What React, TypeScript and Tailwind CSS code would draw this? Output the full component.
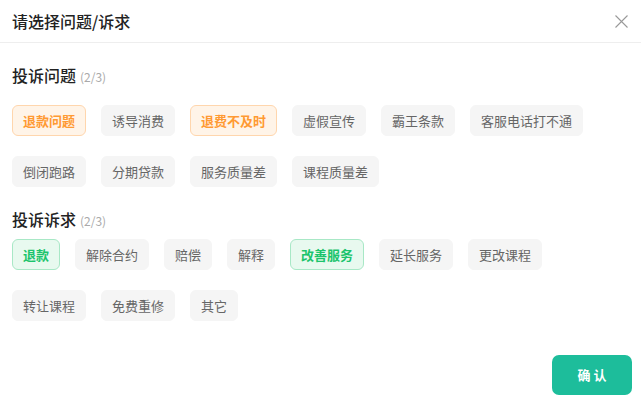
import { useState } from "react";

type Tag = { label: string; selected?: boolean };

const issues: Tag[] = [
  { label: "退款问题", selected: true },
  { label: "诱导消费" },
  { label: "退费不及时", selected: true },
  { label: "虚假宣传" },
  { label: "霸王条款" },
  { label: "客服电话打不通" },
  { label: "倒闭跑路" },
  { label: "分期贷款" },
  { label: "服务质量差" },
  { label: "课程质量差" },
];

const demands: Tag[] = [
  { label: "退款", selected: true },
  { label: "解除合约" },
  { label: "赔偿" },
  { label: "解释" },
  { label: "改善服务", selected: true },
  { label: "延长服务" },
  { label: "更改课程" },
  { label: "转让课程" },
  { label: "免费重修" },
  { label: "其它" },
];

const TagList = ({
  tags,
  tone,
  onToggle,
}: {
  tags: Tag[];
  tone: "orange" | "green";
  onToggle: (i: number) => void;
}) => (
  <div className="flex flex-wrap w-[600px] gap-x-[15px] gap-y-[20px]">
    {tags.map((tag, i) => {
      const active =
        tone === "orange"
          ? "bg-[#fff4e8] border-[#ffd6ad] text-[#ff9a33] font-bold"
          : "bg-[#e8f9ef] border-[#a8e8c6] text-[#1cc46c] font-bold";
      return (
        <button
          key={tag.label}
          onClick={() => onToggle(i)}
          className={`h-[31px] px-[10px] rounded-[6px] border text-[13px] leading-none ${
            tag.selected ? active : "bg-[#f5f5f5] border-[#f5f5f5] text-[#666]"
          }`}
        >
          {tag.label}
        </button>
      );
    })}
  </div>
);

const App = () => {
  const [issueTags, setIssueTags] = useState(issues);
  const [demandTags, setDemandTags] = useState(demands);

  const toggle = (list: Tag[], set: (t: Tag[]) => void) => (i: number) =>
    set(list.map((t, idx) => (idx === i ? { ...t, selected: !t.selected } : t)));

  const count = (list: Tag[]) => list.filter((t) => t.selected).length;

  return (
    <div
      className="w-[641px] h-[399px] bg-white flex flex-col text-[#333]"
      style={{ fontFamily: '"Noto Sans CJK SC", "Noto Sans", sans-serif' }}
    >
      <div className="h-[43px] shrink-0 flex items-center justify-between pl-3 pr-[13px] border-b border-[#eee]">
        <h1 className="text-[16px] font-medium leading-6 text-[#222]">请选择问题/诉求</h1>
        <button className="w-[14px] h-[14px] flex items-center justify-center">
          <svg width="13" height="13" viewBox="0 0 13 13" fill="none">
            <path d="M0.5 0.5L12.5 12.5M12.5 0.5L0.5 12.5" stroke="#999" strokeWidth="1.1" />
          </svg>
        </button>
      </div>

      <div className="px-3 pt-[20px] flex-1">
        <div className="flex items-baseline gap-1 leading-6">
          <span className="text-[16px] font-medium text-[#222]">投诉问题</span>
          <span className="text-[12px] text-[#aaa]">({count(issueTags)}/3)</span>
        </div>
        <div className="mt-[16px]">
          <TagList tags={issueTags} tone="orange" onToggle={toggle(issueTags, setIssueTags)} />
        </div>

        <div className="flex items-baseline gap-1 leading-6 mt-[20px]">
          <span className="text-[16px] font-medium text-[#222]">投诉诉求</span>
          <span className="text-[12px] text-[#aaa]">({count(demandTags)}/3)</span>
        </div>
        <div className="mt-[6px]">
          <TagList tags={demandTags} tone="green" onToggle={toggle(demandTags, setDemandTags)} />
        </div>
      </div>

      <div className="flex justify-end pr-[9px] pb-[4px]">
        <button className="w-[80px] h-[40px] rounded-[7px] bg-[#1dbd9b] text-white text-[13px] font-bold">
          确 认
        </button>
      </div>
    </div>
  );
};

export default App;
